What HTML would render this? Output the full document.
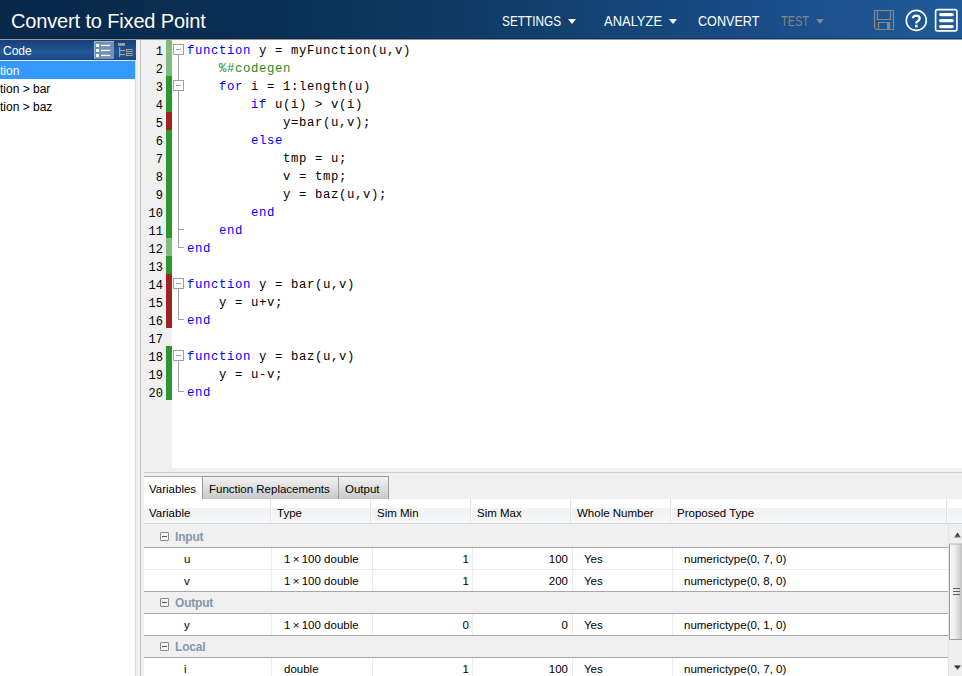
<!DOCTYPE html>
<html><head><meta charset="utf-8"><style>
*{margin:0;padding:0;box-sizing:border-box}
html,body{width:962px;height:676px;overflow:hidden;background:#f0f0f0;font-family:"Liberation Sans",sans-serif}
.abs{position:absolute}
#hdr{left:0;top:0;width:962px;height:39px;background:linear-gradient(90deg,#08284a 0%,#0a2f53 28%,#113f6c 55%,#194c86 78%,#1f5a9a 100%)}
#hdrline{left:0;top:39px;width:962px;height:1px;background:#9c9894}
#hdrdark{left:0;top:38px;width:962px;height:1px;background:rgba(0,20,60,.35)}
#title{left:11px;top:10px;font-size:20px;letter-spacing:-0.15px;color:#fff;white-space:nowrap;line-height:23px}
.menu{top:13px;font-size:14px;color:#fff;white-space:nowrap;line-height:16px;transform-origin:0 0}
.tri{position:absolute;top:6px;width:0;height:0;border-left:4px solid transparent;border-right:4px solid transparent;border-top:5px solid #fff}
#left{left:0;top:40px;width:136px;height:636px;background:#fff}
#lhdr{left:0;top:40px;width:136px;height:20px;background:linear-gradient(180deg,#173f78 0%,#1f5090 45%,#235898 60%,#1a4784 100%)}
#lhdr span{position:absolute;left:3px;top:4px;color:#fff;font-size:12px;line-height:15px}
#lhdrline{left:0;top:60px;width:136px;height:1px;background:#dfe3ea}
.lrow{left:0;width:135px;height:18px;font-size:12px;color:#000;white-space:nowrap}
.lrow span{position:absolute;left:0;top:3px;line-height:14px}
#gapstrip{left:136px;top:40px;width:5px;height:636px;background:#f0f0f0}
#vline{left:140px;top:40px;width:1px;height:636px;background:#c4c4c4}
#code{left:172px;top:40px;width:790px;height:428px;background:#fff}
.ln{left:141px;width:22px;text-align:right;font-family:"Liberation Mono",monospace;font-size:12px;color:#000;height:18px;line-height:18px;padding-top:3px}
.bar{left:166px;width:6px}
.cl{left:187px;height:18px;line-height:18px;padding-top:2px;font-family:"Liberation Mono",monospace;font-size:12.3px;letter-spacing:0.62px;color:#000;white-space:pre}
.k{color:#0000ff}.c{color:#228b22}
.fold{left:173px;width:11px;height:11px;border:1px solid #a0a0a0;background:#fff}
.fold:after{content:"";position:absolute;left:2px;top:4px;width:5px;height:1px;background:#a0a0a0}
.fv{left:178px;width:1px;background:#a0a0a0}
.fh{height:1px;background:#a0a0a0}
#splitl1{left:144px;top:472px;width:818px;height:1px;background:#cdcdcd}
.tab{top:476px;height:23px;font-size:11.5px;white-space:nowrap;border:1px solid #9a9a9a;border-bottom:none;background:linear-gradient(180deg,#f2f2f2 0%,#e2e2e2 40%,#c8c8c8 100%)}
.tab span{position:absolute;left:6px;top:6px;line-height:13px}
#thdrtop{left:144px;top:499px;width:818px;height:9px;background:#fff}
#thdr{left:144px;top:508px;width:818px;height:15px;background:linear-gradient(180deg,#f0f1f3 0%,#f6f7f8 100%)}
#thdrb{left:144px;top:523px;width:818px;height:1px;background:#d8d8d8}
.th{top:499px;height:24px;font-size:11.5px;white-space:nowrap}
.th span{position:absolute;left:6px;top:8px;line-height:13px}
.tsep{top:499px;width:2px;height:24px;border-left:1px solid #e2e2e2;border-right:1px solid #fafafa}
.grp{left:144px;width:804px;height:24px;background:#f0f0f0;border-bottom:1px solid #a8a8a8}
.grp .gi{position:absolute;left:16px;top:8px;width:9px;height:9px;border:1px solid #8a8a8a;border-radius:1px;background:#f6f6f6}
.grp .gi:after{content:"";position:absolute;left:1px;top:3px;width:5px;height:1px;background:#3c5a9a}
.grp span{position:absolute;left:31px;top:7px;font-size:12px;line-height:14px;font-weight:bold;color:#8797ad;letter-spacing:-0.2px}
.row{left:144px;width:804px;height:22px;background:#fff;font-size:11.5px;white-space:nowrap}
.row span{position:absolute;top:5px;line-height:13px}
.csep{width:1px;background:#ececec}
#sb{left:948px;top:524px;width:14px;height:152px;background:#efefef;border-left:1px solid #e4e4e4}

</style></head><body>
<div id="hdr" class="abs"></div><div id="hdrdark" class="abs"></div><div id="hdrline" class="abs"></div>
<div id="title" class="abs">Convert to Fixed Point</div>
<div class="menu abs" style="left:501.5px;color:#fff;transform:scaleX(0.845)">SETTINGS</div>
<div class="tri abs" style="left:568px;top:19px;border-top-color:#fff"></div>
<div class="menu abs" style="left:603.5px;color:#fff;transform:scaleX(0.925)">ANALYZE</div>
<div class="tri abs" style="left:669px;top:19px;border-top-color:#fff"></div>
<div class="menu abs" style="left:697.5px;color:#fff;transform:scaleX(0.9)">CONVERT</div>
<div class="menu abs" style="left:781px;color:#878785;transform:scaleX(0.78)">TEST</div>
<div class="tri abs" style="left:816px;top:19px;border-top-color:#878785"></div>
<svg class="abs" style="left:870px;top:6px" width="92" height="30" viewBox="0 0 92 30">
<g fill="none" stroke="#8a8884" stroke-width="1.2">
<path d="M4.5 4.5 H23.5 V23.5 H6.5 L4.5 21.5 Z"/>
<path d="M7.5 4.5 V13.5 H20.5 V4.5"/>
<path d="M8.5 23.5 V16.5 H19.5 V23.5"/>
</g>
<rect x="17" y="16.5" width="2.5" height="7" fill="#8a8884"/>
<circle cx="46.3" cy="14.4" r="10" fill="none" stroke="#fff" stroke-width="1.6"/>
<path d="M42.9 12.3 Q42.9 9.6 46.3 9.6 Q49.7 9.6 49.7 12.3 Q49.7 14.2 47.6 15.2 Q46.3 15.9 46.3 17.6" fill="none" stroke="#fff" stroke-width="2.2"/><rect x="45" y="18.8" width="2.6" height="2.6" fill="#fff"/>
<rect x="65.6" y="3.6" width="21.3" height="21.3" rx="1.8" fill="none" stroke="#fff" stroke-width="1.6"/>
<g stroke="#fff" stroke-width="3.2" stroke-linecap="round"><path d="M70.6 8.6H82.3M70.6 14.6H82.3M70.6 20.6H82.3"/></g>
</svg>
<div id="left" class="abs"></div>
<div id="lhdr" class="abs"><span>Code</span></div><div id="lhdrline" class="abs"></div>
<svg class="abs" style="left:88px;top:38px" width="52" height="26" viewBox="0 0 52 26">
<rect x="6" y="3" width="20" height="18" fill="#7390b8"/>
<path d="M6.5 21V3.5H26" fill="none" stroke="#a0b4d0" stroke-width="1"/>
<g fill="#fff"><rect x="8" y="6" width="3" height="3"/><rect x="8" y="11" width="3" height="3"/><rect x="8" y="16" width="3" height="3"/>
<rect x="13" y="6.8" width="9.2" height="1.3"/><rect x="13" y="11.8" width="9.2" height="1.3"/><rect x="13" y="16.8" width="9.2" height="1.3"/></g>
<g fill="#a8a292"><rect x="30" y="5.1" width="7" height="2.7"/><rect x="31" y="9.2" width="1.2" height="9.8"/>
<rect x="31" y="12" width="6" height="1.1"/><rect x="31" y="16" width="6" height="1.1"/></g>
<g fill="none" stroke="#a8a292" stroke-width="1"><rect x="38.5" y="11.5" width="5.5" height="2"/><rect x="38.5" y="15.5" width="5.5" height="2"/></g>
</svg>
<div class="abs" style="left:135px;top:61px;width:1px;height:615px;background:#dadada"></div>
<div class="lrow abs" style="top:61px;background:#3399ff;color:#fff"><span>tion</span></div>
<div class="lrow abs" style="top:79px"><span>tion &gt; bar</span></div>
<div class="lrow abs" style="top:97px"><span>tion &gt; baz</span></div>
<div id="gapstrip" class="abs"></div><div id="vline" class="abs"></div><div id="code" class="abs"></div>
<div class="ln abs" style="top:40px">1</div>
<div class="bar abs" style="top:40px;height:18px;background:#80bc80"></div>
<div class="cl abs" style="top:40px"><span class="k">function</span> y = myFunction(u,v)</div>
<div class="ln abs" style="top:58px">2</div>
<div class="bar abs" style="top:58px;height:18px;background:#80bc80"></div>
<div class="cl abs" style="top:58px">    <span class="c">%#codegen</span></div>
<div class="ln abs" style="top:76px">3</div>
<div class="bar abs" style="top:76px;height:18px;background:#2e962e"></div>
<div class="cl abs" style="top:76px">    <span class="k">for</span> i = 1:length(u)</div>
<div class="ln abs" style="top:94px">4</div>
<div class="bar abs" style="top:94px;height:18px;background:#2e962e"></div>
<div class="cl abs" style="top:94px">        <span class="k">if</span> u(i) &gt; v(i)</div>
<div class="ln abs" style="top:112px">5</div>
<div class="bar abs" style="top:112px;height:18px;background:#a02222"></div>
<div class="cl abs" style="top:112px">            y=bar(u,v);</div>
<div class="ln abs" style="top:130px">6</div>
<div class="bar abs" style="top:130px;height:18px;background:#2e962e"></div>
<div class="cl abs" style="top:130px">        <span class="k">else</span></div>
<div class="ln abs" style="top:148px">7</div>
<div class="bar abs" style="top:148px;height:18px;background:#2e962e"></div>
<div class="cl abs" style="top:148px">            tmp = u;</div>
<div class="ln abs" style="top:166px">8</div>
<div class="bar abs" style="top:166px;height:18px;background:#2e962e"></div>
<div class="cl abs" style="top:166px">            v = tmp;</div>
<div class="ln abs" style="top:184px">9</div>
<div class="bar abs" style="top:184px;height:18px;background:#2e962e"></div>
<div class="cl abs" style="top:184px">            y = baz(u,v);</div>
<div class="ln abs" style="top:202px">10</div>
<div class="bar abs" style="top:202px;height:18px;background:#2e962e"></div>
<div class="cl abs" style="top:202px">        <span class="k">end</span></div>
<div class="ln abs" style="top:220px">11</div>
<div class="bar abs" style="top:220px;height:18px;background:#2e962e"></div>
<div class="cl abs" style="top:220px">    <span class="k">end</span></div>
<div class="ln abs" style="top:238px">12</div>
<div class="bar abs" style="top:238px;height:18px;background:#80bc80"></div>
<div class="cl abs" style="top:238px"><span class="k">end</span></div>
<div class="ln abs" style="top:256px">13</div>
<div class="bar abs" style="top:256px;height:18px;background:#2e962e"></div>
<div class="ln abs" style="top:274px">14</div>
<div class="bar abs" style="top:274px;height:18px;background:#a02222"></div>
<div class="cl abs" style="top:274px"><span class="k">function</span> y = bar(u,v)</div>
<div class="ln abs" style="top:292px">15</div>
<div class="bar abs" style="top:292px;height:18px;background:#a02222"></div>
<div class="cl abs" style="top:292px">    y = u+v;</div>
<div class="ln abs" style="top:310px">16</div>
<div class="bar abs" style="top:310px;height:18px;background:#a02222"></div>
<div class="cl abs" style="top:310px"><span class="k">end</span></div>
<div class="ln abs" style="top:328px">17</div>
<div class="ln abs" style="top:346px">18</div>
<div class="bar abs" style="top:346px;height:18px;background:#2e962e"></div>
<div class="cl abs" style="top:346px"><span class="k">function</span> y = baz(u,v)</div>
<div class="ln abs" style="top:364px">19</div>
<div class="bar abs" style="top:364px;height:18px;background:#2e962e"></div>
<div class="cl abs" style="top:364px">    y = u-v;</div>
<div class="ln abs" style="top:382px">20</div>
<div class="bar abs" style="top:382px;height:18px;background:#2e962e"></div>
<div class="cl abs" style="top:382px"><span class="k">end</span></div>
<div class="fv abs" style="top:55px;height:193px"></div>
<div class="fh abs" style="left:178px;top:247px;width:6px"></div>
<div class="fh abs" style="left:178px;top:229px;width:6px"></div>
<div class="fv abs" style="top:289px;height:31px"></div>
<div class="fh abs" style="left:178px;top:319px;width:6px"></div>
<div class="fv abs" style="top:361px;height:31px"></div>
<div class="fh abs" style="left:178px;top:391px;width:6px"></div>
<div class="fold abs" style="top:44px"></div>
<div class="fold abs" style="top:80px"></div>
<div class="fold abs" style="top:278px"></div>
<div class="fold abs" style="top:350px"></div>
<div id="splitl1" class="abs"></div>
<div class="tab abs" style="left:144px;width:58px;background:#fff;border:none;border-top:1px solid #a8a8a8"><span style="left:5px;top:6px">Variables</span></div>
<div class="tab abs" style="left:202px;width:137px"><span>Function Replacements</span></div>
<div class="tab abs" style="left:338px;width:51px"><span>Output</span></div>
<div id="thdrtop" class="abs"></div><div id="thdr" class="abs"></div><div id="thdrb" class="abs"></div>
<div class="th abs" style="left:144px;width:127px"><span style="left:5px">Variable</span></div>
<div class="tsep abs" style="left:270px"></div>
<div class="th abs" style="left:271px;width:100px"><span style="left:6px">Type</span></div>
<div class="tsep abs" style="left:370px"></div>
<div class="th abs" style="left:371px;width:100px"><span style="left:6px">Sim Min</span></div>
<div class="tsep abs" style="left:470px"></div>
<div class="th abs" style="left:471px;width:100px"><span style="left:6px">Sim Max</span></div>
<div class="tsep abs" style="left:570px"></div>
<div class="th abs" style="left:571px;width:100px"><span style="left:6px">Whole Number</span></div>
<div class="tsep abs" style="left:670px"></div>
<div class="th abs" style="left:671px;width:276px"><span style="left:6px">Proposed Type</span></div>
<div class="tsep abs" style="left:946px"></div>
<div class="grp abs" style="top:524px;height:24px"><div class="gi" style="top:8px"></div><span style="top:6px">Input</span></div>
<div class="row abs" style="top:548px;border-bottom:1px solid #ececec">
<div class="csep abs" style="left:127px;top:0;height:21px"></div>
<div class="csep abs" style="left:228px;top:0;height:21px"></div>
<div class="csep abs" style="left:328px;top:0;height:21px"></div>
<div class="csep abs" style="left:428px;top:0;height:21px"></div>
<div class="csep abs" style="left:528px;top:0;height:21px"></div>
<span style="left:40px">u</span>
<span style="left:140px">1 × 100 double</span>
<span style="right:479px">1</span>
<span style="right:380px">100</span>
<span style="left:440px">Yes</span>
<span style="left:540px">numerictype(0, 7, 0)</span>
</div>
<div class="row abs" style="top:570px;border-bottom:1px solid #a8a8a8">
<div class="csep abs" style="left:127px;top:0;height:21px"></div>
<div class="csep abs" style="left:228px;top:0;height:21px"></div>
<div class="csep abs" style="left:328px;top:0;height:21px"></div>
<div class="csep abs" style="left:428px;top:0;height:21px"></div>
<div class="csep abs" style="left:528px;top:0;height:21px"></div>
<span style="left:40px">v</span>
<span style="left:140px">1 × 100 double</span>
<span style="right:479px">1</span>
<span style="right:380px">200</span>
<span style="left:440px">Yes</span>
<span style="left:540px">numerictype(0, 8, 0)</span>
</div>
<div class="grp abs" style="top:592px;height:22px"><div class="gi" style="top:6px"></div><span style="top:4px">Output</span></div>
<div class="row abs" style="top:614px;border-bottom:1px solid #a8a8a8">
<div class="csep abs" style="left:127px;top:0;height:21px"></div>
<div class="csep abs" style="left:228px;top:0;height:21px"></div>
<div class="csep abs" style="left:328px;top:0;height:21px"></div>
<div class="csep abs" style="left:428px;top:0;height:21px"></div>
<div class="csep abs" style="left:528px;top:0;height:21px"></div>
<span style="left:40px">y</span>
<span style="left:140px">1 × 100 double</span>
<span style="right:479px">0</span>
<span style="right:380px">0</span>
<span style="left:440px">Yes</span>
<span style="left:540px">numerictype(0, 1, 0)</span>
</div>
<div class="grp abs" style="top:636px;height:22px"><div class="gi" style="top:6px"></div><span style="top:4px">Local</span></div>
<div class="row abs" style="top:658px;border-bottom:1px solid #a8a8a8">
<div class="csep abs" style="left:127px;top:0;height:21px"></div>
<div class="csep abs" style="left:228px;top:0;height:21px"></div>
<div class="csep abs" style="left:328px;top:0;height:21px"></div>
<div class="csep abs" style="left:428px;top:0;height:21px"></div>
<div class="csep abs" style="left:528px;top:0;height:21px"></div>
<span style="left:40px">i</span>
<span style="left:140px">double</span>
<span style="right:479px">1</span>
<span style="right:380px">100</span>
<span style="left:440px">Yes</span>
<span style="left:540px">numerictype(0, 7, 0)</span>
</div>
<div id="sb" class="abs"></div>
<svg class="abs" style="left:948px;top:524px" width="14" height="152" viewBox="0 0 14 152">
<defs><linearGradient id="tg" x1="0" x2="1" y1="0" y2="0"><stop offset="0" stop-color="#fbfbfb"/><stop offset="0.45" stop-color="#ececec"/><stop offset="1" stop-color="#c4c4c4"/></linearGradient>
<linearGradient id="ag" x1="0" x2="0" y1="0" y2="1"><stop offset="0" stop-color="#202020"/><stop offset="1" stop-color="#707070"/></linearGradient></defs>
<path d="M6 13.5 L9.5 8.5 L13 13.5 Z" fill="url(#ag)"/>
<rect x="1" y="20" width="13" height="95.5" fill="url(#tg)"/>
<path d="M1.5 20 V115.5 H14" fill="none" stroke="#9c9c9c" stroke-width="1"/>
<path d="M1.5 20 H14" fill="none" stroke="#b8b8b8" stroke-width="1"/>
<g stroke="#606060" stroke-width="1"><path d="M5 64.5H12M5 67.5H12M5 70.5H12"/></g>
<path d="M6 141.5 L13 141.5 L9.5 146 Z" fill="url(#ag)"/>
</svg>
</body></html>
